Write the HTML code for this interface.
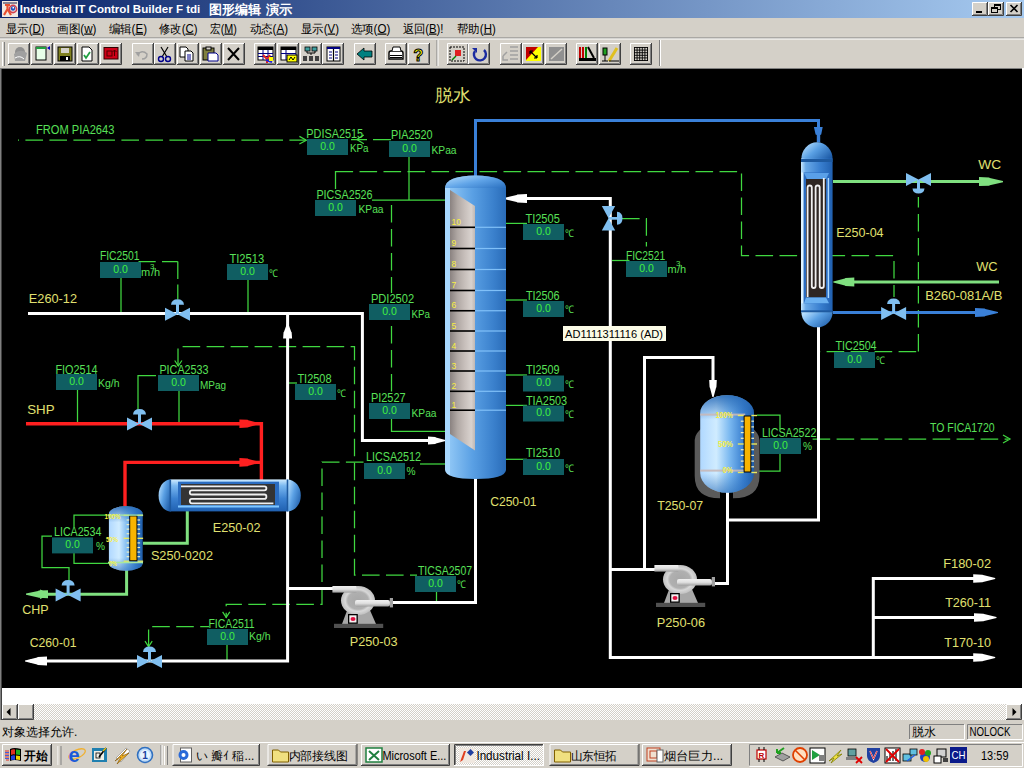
<!DOCTYPE html><html><head><meta charset="utf-8"><style>html,body{margin:0;padding:0;width:1024px;height:768px;overflow:hidden;background:#d4d0c8}svg{display:block;position:absolute;left:0;top:0}text{font-family:"Liberation Sans",sans-serif}</style></head><body>
<svg width="1024" height="768" viewBox="0 0 1024 768">
<defs><linearGradient id="tg" x1="0" x2="1" y1="0" y2="0"><stop offset="0" stop-color="#0a246a"/><stop offset="1" stop-color="#a6caf0"/></linearGradient><pattern id="dith" width="2" height="2" patternUnits="userSpaceOnUse"><rect width="2" height="2" fill="#d4d0c8"/><rect width="1" height="1" fill="#ffffff"/><rect x="1" y="1" width="1" height="1" fill="#ffffff"/></pattern></defs>
<rect x="0" y="0" width="1024" height="768" fill="#d4d0c8"/>
<rect x="0" y="0" width="1024" height="18" fill="url(#tg)"/>
<rect x="2" y="1" width="16" height="16" fill="#f0e8e0"/>
<rect x="3" y="2" width="14" height="2" fill="#404060" opacity="0.6"/><path d="M5,5 H10 M7.5,5 V9 L4,15 M7.5,9 L11,15" stroke="#e85030" stroke-width="2.2" fill="none"/><circle cx="13" cy="9" r="3.6" fill="none" stroke="#d04050" stroke-width="1.6"/><circle cx="13" cy="8.5" r="2.2" fill="#2050c0"/><rect x="12.5" y="7" width="1.5" height="1.5" fill="#fff"/>
<text x="19.8" y="13" fill="#ffffff" font-size="11.5" font-weight="bold" textLength="180.5" lengthAdjust="spacingAndGlyphs">Industrial IT Control Builder F tdi</text>
<text x="209" y="13.5" fill="#ffffff" font-size="12.5" font-weight="bold">图形编辑</text>
<text x="266" y="13.5" fill="#ffffff" font-size="12.5" font-weight="bold" textLength="26.5" lengthAdjust="spacingAndGlyphs">演示</text>
<rect x="972" y="2" width="16" height="14" fill="#d4d0c8"/>
<path d="M972.5,15 V2.5 H987" stroke="#ffffff" fill="none" stroke-width="1"/>
<path d="M973,14.5 H986.5 V3" stroke="#808080" fill="none" stroke-width="1"/>
<path d="M972,15.5 H987.5 V2" stroke="#404040" fill="none" stroke-width="1"/>
<rect x="976" y="11" width="6" height="2" fill="#000"/>
<rect x="988" y="2" width="16" height="14" fill="#d4d0c8"/>
<path d="M988.5,15 V2.5 H1003" stroke="#ffffff" fill="none" stroke-width="1"/>
<path d="M989,14.5 H1002.5 V3" stroke="#808080" fill="none" stroke-width="1"/>
<path d="M988,15.5 H1003.5 V2" stroke="#404040" fill="none" stroke-width="1"/>
<rect x="994.5" y="4.5" width="6" height="5" fill="none" stroke="#000"/><rect x="994" y="4" width="7" height="2" fill="#000"/>
<rect x="991.5" y="7.5" width="6" height="5" fill="#d4d0c8" stroke="#000"/><rect x="991" y="7" width="7" height="2" fill="#000"/>
<rect x="1006" y="2" width="16" height="14" fill="#d4d0c8"/>
<path d="M1006.5,15 V2.5 H1021" stroke="#ffffff" fill="none" stroke-width="1"/>
<path d="M1007,14.5 H1020.5 V3" stroke="#808080" fill="none" stroke-width="1"/>
<path d="M1006,15.5 H1021.5 V2" stroke="#404040" fill="none" stroke-width="1"/>
<path d="M1010.5,5 L1017.5,12 M1017.5,5 L1010.5,12" stroke="#000" stroke-width="1.6"/>
<text x="6" y="32.5" fill="#000" font-size="12" textLength="38.5" lengthAdjust="spacingAndGlyphs">显示(<tspan text-decoration="underline">D</tspan>)</text>
<text x="57" y="32.5" fill="#000" font-size="12" textLength="39.5" lengthAdjust="spacingAndGlyphs">画图(<tspan text-decoration="underline">w</tspan>)</text>
<text x="108.5" y="32.5" fill="#000" font-size="12" textLength="38.5" lengthAdjust="spacingAndGlyphs">编辑(<tspan text-decoration="underline">E</tspan>)</text>
<text x="159" y="32.5" fill="#000" font-size="12" textLength="38.5" lengthAdjust="spacingAndGlyphs">修改(<tspan text-decoration="underline">C</tspan>)</text>
<text x="210" y="32.5" fill="#000" font-size="12" textLength="26.9" lengthAdjust="spacingAndGlyphs">宏(<tspan text-decoration="underline">M</tspan>)</text>
<text x="249.5" y="32.5" fill="#000" font-size="12" textLength="38.5" lengthAdjust="spacingAndGlyphs">动态(<tspan text-decoration="underline">A</tspan>)</text>
<text x="301" y="32.5" fill="#000" font-size="12" textLength="38.0" lengthAdjust="spacingAndGlyphs">显示(<tspan text-decoration="underline">V</tspan>)</text>
<text x="350.5" y="32.5" fill="#000" font-size="12" textLength="39.8" lengthAdjust="spacingAndGlyphs">选项(<tspan text-decoration="underline">O</tspan>)</text>
<text x="402.5" y="32.5" fill="#000" font-size="12" textLength="41.0" lengthAdjust="spacingAndGlyphs">返回(<tspan text-decoration="underline">B</tspan>)!</text>
<text x="457" y="32.5" fill="#000" font-size="12" textLength="38.7" lengthAdjust="spacingAndGlyphs">帮助(<tspan text-decoration="underline">H</tspan>)</text>
<rect x="0" y="37.5" width="1024" height="1" fill="#808080"/><rect x="0" y="38.5" width="1024" height="1" fill="#ffffff"/>
<rect x="2" y="42" width="1" height="24" fill="#ffffff"/><rect x="4" y="42" width="1" height="24" fill="#808080"/>
<rect x="659" y="40" width="1" height="26" fill="#808080"/><rect x="660" y="40" width="1" height="26" fill="#ffffff"/>
<rect x="436.5" y="40" width="1" height="26" fill="#808080"/><rect x="437.5" y="40" width="1" height="26" fill="#ffffff"/>
<rect x="8" y="43" width="22" height="22" fill="#d4d0c8"/>
<path d="M8.5,64 V43.5 H29" stroke="#ffffff" fill="none" stroke-width="1"/>
<path d="M9,63.5 H28.5 V44" stroke="#808080" fill="none" stroke-width="1"/>
<path d="M8,64.5 H29.5 V43" stroke="#404040" fill="none" stroke-width="1"/>
<rect x="31" y="43" width="22" height="22" fill="#d4d0c8"/>
<path d="M31.5,64 V43.5 H52" stroke="#ffffff" fill="none" stroke-width="1"/>
<path d="M32,63.5 H51.5 V44" stroke="#808080" fill="none" stroke-width="1"/>
<path d="M31,64.5 H52.5 V43" stroke="#404040" fill="none" stroke-width="1"/>
<rect x="54" y="43" width="22" height="22" fill="#d4d0c8"/>
<path d="M54.5,64 V43.5 H75" stroke="#ffffff" fill="none" stroke-width="1"/>
<path d="M55,63.5 H74.5 V44" stroke="#808080" fill="none" stroke-width="1"/>
<path d="M54,64.5 H75.5 V43" stroke="#404040" fill="none" stroke-width="1"/>
<rect x="77" y="43" width="22" height="22" fill="#d4d0c8"/>
<path d="M77.5,64 V43.5 H98" stroke="#ffffff" fill="none" stroke-width="1"/>
<path d="M78,63.5 H97.5 V44" stroke="#808080" fill="none" stroke-width="1"/>
<path d="M77,64.5 H98.5 V43" stroke="#404040" fill="none" stroke-width="1"/>
<rect x="100" y="43" width="22" height="22" fill="#d4d0c8"/>
<path d="M100.5,64 V43.5 H121" stroke="#ffffff" fill="none" stroke-width="1"/>
<path d="M101,63.5 H120.5 V44" stroke="#808080" fill="none" stroke-width="1"/>
<path d="M100,64.5 H121.5 V43" stroke="#404040" fill="none" stroke-width="1"/>
<rect x="132" y="43" width="22" height="22" fill="#d4d0c8"/>
<path d="M132.5,64 V43.5 H153" stroke="#ffffff" fill="none" stroke-width="1"/>
<path d="M133,63.5 H152.5 V44" stroke="#808080" fill="none" stroke-width="1"/>
<path d="M132,64.5 H153.5 V43" stroke="#404040" fill="none" stroke-width="1"/>
<rect x="154" y="43" width="22" height="22" fill="#d4d0c8"/>
<path d="M154.5,64 V43.5 H175" stroke="#ffffff" fill="none" stroke-width="1"/>
<path d="M155,63.5 H174.5 V44" stroke="#808080" fill="none" stroke-width="1"/>
<path d="M154,64.5 H175.5 V43" stroke="#404040" fill="none" stroke-width="1"/>
<rect x="177" y="43" width="22" height="22" fill="#d4d0c8"/>
<path d="M177.5,64 V43.5 H198" stroke="#ffffff" fill="none" stroke-width="1"/>
<path d="M178,63.5 H197.5 V44" stroke="#808080" fill="none" stroke-width="1"/>
<path d="M177,64.5 H198.5 V43" stroke="#404040" fill="none" stroke-width="1"/>
<rect x="200" y="43" width="22" height="22" fill="#d4d0c8"/>
<path d="M200.5,64 V43.5 H221" stroke="#ffffff" fill="none" stroke-width="1"/>
<path d="M201,63.5 H220.5 V44" stroke="#808080" fill="none" stroke-width="1"/>
<path d="M200,64.5 H221.5 V43" stroke="#404040" fill="none" stroke-width="1"/>
<rect x="223" y="43" width="22" height="22" fill="#d4d0c8"/>
<path d="M223.5,64 V43.5 H244" stroke="#ffffff" fill="none" stroke-width="1"/>
<path d="M224,63.5 H243.5 V44" stroke="#808080" fill="none" stroke-width="1"/>
<path d="M223,64.5 H244.5 V43" stroke="#404040" fill="none" stroke-width="1"/>
<rect x="254" y="43" width="22" height="22" fill="#d4d0c8"/>
<path d="M254.5,64 V43.5 H275" stroke="#ffffff" fill="none" stroke-width="1"/>
<path d="M255,63.5 H274.5 V44" stroke="#808080" fill="none" stroke-width="1"/>
<path d="M254,64.5 H275.5 V43" stroke="#404040" fill="none" stroke-width="1"/>
<rect x="277" y="43" width="22" height="22" fill="#d4d0c8"/>
<path d="M277.5,64 V43.5 H298" stroke="#ffffff" fill="none" stroke-width="1"/>
<path d="M278,63.5 H297.5 V44" stroke="#808080" fill="none" stroke-width="1"/>
<path d="M277,64.5 H298.5 V43" stroke="#404040" fill="none" stroke-width="1"/>
<rect x="300" y="43" width="22" height="22" fill="#d4d0c8"/>
<path d="M300.5,64 V43.5 H321" stroke="#ffffff" fill="none" stroke-width="1"/>
<path d="M301,63.5 H320.5 V44" stroke="#808080" fill="none" stroke-width="1"/>
<path d="M300,64.5 H321.5 V43" stroke="#404040" fill="none" stroke-width="1"/>
<rect x="322" y="43" width="22" height="22" fill="#d4d0c8"/>
<path d="M322.5,64 V43.5 H343" stroke="#ffffff" fill="none" stroke-width="1"/>
<path d="M323,63.5 H342.5 V44" stroke="#808080" fill="none" stroke-width="1"/>
<path d="M322,64.5 H343.5 V43" stroke="#404040" fill="none" stroke-width="1"/>
<rect x="354" y="43" width="22" height="22" fill="#d4d0c8"/>
<path d="M354.5,64 V43.5 H375" stroke="#ffffff" fill="none" stroke-width="1"/>
<path d="M355,63.5 H374.5 V44" stroke="#808080" fill="none" stroke-width="1"/>
<path d="M354,64.5 H375.5 V43" stroke="#404040" fill="none" stroke-width="1"/>
<rect x="385" y="43" width="22" height="22" fill="#d4d0c8"/>
<path d="M385.5,64 V43.5 H406" stroke="#ffffff" fill="none" stroke-width="1"/>
<path d="M386,63.5 H405.5 V44" stroke="#808080" fill="none" stroke-width="1"/>
<path d="M385,64.5 H406.5 V43" stroke="#404040" fill="none" stroke-width="1"/>
<rect x="408" y="43" width="22" height="22" fill="#d4d0c8"/>
<path d="M408.5,64 V43.5 H429" stroke="#ffffff" fill="none" stroke-width="1"/>
<path d="M409,63.5 H428.5 V44" stroke="#808080" fill="none" stroke-width="1"/>
<path d="M408,64.5 H429.5 V43" stroke="#404040" fill="none" stroke-width="1"/>
<rect x="447" y="43" width="22" height="22" fill="#d4d0c8"/>
<path d="M447.5,64 V43.5 H468" stroke="#ffffff" fill="none" stroke-width="1"/>
<path d="M448,63.5 H467.5 V44" stroke="#808080" fill="none" stroke-width="1"/>
<path d="M447,64.5 H468.5 V43" stroke="#404040" fill="none" stroke-width="1"/>
<rect x="468" y="43" width="22" height="22" fill="#d4d0c8"/>
<path d="M468.5,64 V43.5 H489" stroke="#ffffff" fill="none" stroke-width="1"/>
<path d="M469,63.5 H488.5 V44" stroke="#808080" fill="none" stroke-width="1"/>
<path d="M468,64.5 H489.5 V43" stroke="#404040" fill="none" stroke-width="1"/>
<rect x="500" y="43" width="22" height="22" fill="#d4d0c8"/>
<path d="M500.5,64 V43.5 H521" stroke="#ffffff" fill="none" stroke-width="1"/>
<path d="M501,63.5 H520.5 V44" stroke="#808080" fill="none" stroke-width="1"/>
<path d="M500,64.5 H521.5 V43" stroke="#404040" fill="none" stroke-width="1"/>
<rect x="522" y="43" width="22" height="22" fill="#d4d0c8"/>
<path d="M522.5,64 V43.5 H543" stroke="#ffffff" fill="none" stroke-width="1"/>
<path d="M523,63.5 H542.5 V44" stroke="#808080" fill="none" stroke-width="1"/>
<path d="M522,64.5 H543.5 V43" stroke="#404040" fill="none" stroke-width="1"/>
<rect x="545" y="43" width="22" height="22" fill="#d4d0c8"/>
<path d="M545.5,64 V43.5 H566" stroke="#ffffff" fill="none" stroke-width="1"/>
<path d="M546,63.5 H565.5 V44" stroke="#808080" fill="none" stroke-width="1"/>
<path d="M545,64.5 H566.5 V43" stroke="#404040" fill="none" stroke-width="1"/>
<rect x="576" y="43" width="22" height="22" fill="#d4d0c8"/>
<path d="M576.5,64 V43.5 H597" stroke="#ffffff" fill="none" stroke-width="1"/>
<path d="M577,63.5 H596.5 V44" stroke="#808080" fill="none" stroke-width="1"/>
<path d="M576,64.5 H597.5 V43" stroke="#404040" fill="none" stroke-width="1"/>
<rect x="599" y="43" width="22" height="22" fill="#d4d0c8"/>
<path d="M599.5,64 V43.5 H620" stroke="#ffffff" fill="none" stroke-width="1"/>
<path d="M600,63.5 H619.5 V44" stroke="#808080" fill="none" stroke-width="1"/>
<path d="M599,64.5 H620.5 V43" stroke="#404040" fill="none" stroke-width="1"/>
<rect x="630" y="43" width="22" height="22" fill="#d4d0c8"/>
<path d="M630.5,64 V43.5 H651" stroke="#ffffff" fill="none" stroke-width="1"/>
<path d="M631,63.5 H650.5 V44" stroke="#808080" fill="none" stroke-width="1"/>
<path d="M630,64.5 H651.5 V43" stroke="#404040" fill="none" stroke-width="1"/>
<circle cx="20" cy="52" r="5" fill="#909090"/><path d="M14,54 Q20,48 27,53 L25,61 L15,61 Z" fill="#a0a0a0"/><path d="M15,58 Q20,55 24,59" stroke="#fff" fill="none"/>
<rect x="36" y="47" width="10" height="13" fill="#e8ffe8" stroke="#000"/><rect x="36" y="47" width="10" height="2" fill="#20a040"/><path d="M47,48 L50,46 L50,50 Z" fill="#0000c0"/>
<rect x="58" y="47" width="14" height="14" fill="#808020" stroke="#000"/><rect x="61" y="48" width="8" height="5" fill="#d4d0c8"/><rect x="60" y="56" width="10" height="5" fill="#000"/><rect x="66" y="57" width="2" height="3" fill="#fff"/>
<path d="M82,47 H89 L92,50 V61 H82 Z" fill="#fff" stroke="#000"/><path d="M84,55 L86,58 L90,52" stroke="#20a040" stroke-width="1.8" fill="none"/>
<rect x="104" y="47.5" width="14" height="11.5" fill="#d00018" stroke="#300000"/><rect x="107" y="51" width="5" height="5" fill="none" stroke="#500000"/><path d="M114.5,50 V56 M112.5,52 L114.5,50 L116.5,52" stroke="#500000" fill="none"/>
<path d="M137,55 Q142,49 147,54 Q147,59 142,59" stroke="#a0a0a0" stroke-width="1.5" fill="none"/><path d="M135,52 L139,57 L140,52 Z" fill="#a0a0a0"/>
<path d="M161,47 L167,57 M168,47 L162,57" stroke="#000" stroke-width="1.2"/><circle cx="161" cy="59" r="2.5" fill="none" stroke="#00008b" stroke-width="1.4"/><circle cx="168" cy="59" r="2.5" fill="none" stroke="#00008b" stroke-width="1.4"/>
<path d="M180,47 H186 L188,49 V57 H180 Z" fill="#fff" stroke="#000"/><path d="M185,51 H191 L193,53 V61 H185 Z" fill="#fff" stroke="#000"/><path d="M187,55 H191 M187,57 H191 M187,59 H191" stroke="#00008b"/>
<rect x="203" y="48" width="11" height="12" fill="#808040" stroke="#000"/><rect x="206" y="47" width="5" height="3" fill="#d4d0c8" stroke="#000"/><path d="M208,53 H216 L218,55 V61 H208 Z" fill="#fff" stroke="#00008b"/>
<path d="M228,48 L239,60 M239,48 L228,60" stroke="#000" stroke-width="2"/>
<rect x="258" y="47" width="15" height="13" fill="#fff" stroke="#000"/><rect x="258" y="47" width="15" height="3" fill="#000"/><path d="M258,53.5 H273 M258,56.5 H273 M263,50 V60 M268,50 V60" stroke="#000080" stroke-width="1"/>
<path d="M263,55 L267,59 L270,55 M267,59 V63" stroke="#e02020" stroke-width="2" fill="none"/><path d="M266,60 L272,62" stroke="#2020e0" stroke-width="2"/><rect x="269" y="57" width="4" height="4" fill="#ffff00"/>
<rect x="281" y="47" width="15" height="13" fill="#fff" stroke="#000"/><rect x="281" y="47" width="15" height="3" fill="#000"/><path d="M281,53.5 H296 M286,50 V60" stroke="#000080" stroke-width="1"/>
<rect x="287" y="55" width="10" height="7" fill="#ffff00" stroke="#000"/><path d="M289,60 L291,57 L293,60 L295,57" stroke="#000" fill="none"/>
<rect x="305" y="47" width="5" height="4" fill="#40a0a0" stroke="#000" stroke-width="0.8"/><rect x="312" y="47" width="5" height="4" fill="#40a0a0" stroke="#000" stroke-width="0.8"/><path d="M307,51 V53 H315 V51 M311,53 V55" stroke="#000" fill="none"/><rect x="303" y="56" width="4" height="5" fill="#404040"/><rect x="309" y="56" width="4" height="5" fill="#404040"/><rect x="315" y="56" width="4" height="5" fill="#404040"/>
<rect x="327" y="47" width="13" height="14" fill="#fff" stroke="#000"/><rect x="327" y="47" width="13" height="2" fill="#000080"/><path d="M333.5,49 V61" stroke="#000" stroke-width="1.2"/><path d="M329,52 H332 M329,55 H332 M329,58 H332 M335,52 H338 M335,55 H338 M335,58 H338" stroke="#000080"/>
<path d="M357,54 L364,48 L364,51 L372,51 L372,57 L364,57 L364,60 Z" fill="#008080" stroke="#000" stroke-width="0.8"/>
<path d="M389,53 Q389,51 391,51 H401 Q403,51 403,53 V59 H389 Z" fill="#fff" stroke="#000" stroke-width="1.4"/><path d="M392,51 L393,47 H400 L401,51" fill="#fff" stroke="#000"/><path d="M390,55.5 H402 M390,57.5 H402" stroke="#000"/>
<text x="413.5" y="61" font-size="16" font-weight="bold" fill="#ffff00" stroke="#000" stroke-width="1">?</text>
<rect x="450" y="47" width="14" height="14" fill="none" stroke="#000" stroke-dasharray="2 1"/><rect x="455" y="50" width="6" height="6" fill="#e02020"/><path d="M452,60 L456,56" stroke="#008000" stroke-width="1.5"/>
<path d="M484,50 A6,6 0 1 1 475,51" stroke="#1a2aa0" stroke-width="2.4" fill="none"/><path d="M472,48 L477,48 L477,53 Z" fill="#1a2aa0"/>
<path d="M503,56 V60 H508 M503,56 L507,52" stroke="#a0a0a0" stroke-width="1.5" fill="none"/><path d="M510,47 H518 M510,51 H518 M510,55 H518 M510,59 H518" stroke="#a0a0a0" stroke-width="1.5"/>
<rect x="526" y="47" width="15" height="14" fill="#ffff00"/><path d="M526,47 H538 L526,60 Z" fill="#c00000"/><path d="M530,51 L537,58 M530,51 L530,54 M530,51 L533,51 M537,58 L537,55 M537,58 L534,58" stroke="#000" stroke-width="1.2"/>
<rect x="549" y="47" width="15" height="14" fill="#909090"/><path d="M551,59 L562,49" stroke="#d4d0c8" stroke-width="1.5"/>
<path d="M580,47 V58 M583,47 V58" stroke="#c00000" stroke-width="2"/><path d="M586,47 V58" stroke="#008000" stroke-width="2"/><path d="M588,47 L594,58" stroke="#000" stroke-width="2"/><rect x="579" y="58" width="17" height="3" fill="#000"/>
<rect x="603" y="48" width="4" height="7" fill="#20a020" stroke="#000"/><path d="M605,55 V61 M602,61 H608" stroke="#000"/><path d="M609,61 L617,48" stroke="#e0c020" stroke-width="3"/><path d="M609,61 H619" stroke="#000"/>
<path d="M634.5,47 V61 M634,47.5 H648" stroke="#000" stroke-width="0.9"/>
<path d="M637.1,47 V61 M634,50.1 H648" stroke="#000" stroke-width="0.9"/>
<path d="M639.7,47 V61 M634,52.7 H648" stroke="#000" stroke-width="0.9"/>
<path d="M642.3,47 V61 M634,55.3 H648" stroke="#000" stroke-width="0.9"/>
<path d="M644.9,47 V61 M634,57.9 H648" stroke="#000" stroke-width="0.9"/>
<path d="M647.5,47 V61 M634,60.5 H648" stroke="#000" stroke-width="0.9"/>
<rect x="2" y="69" width="1020" height="619" fill="#000"/>
<defs>
<linearGradient id="colb" x1="0" x2="1" y1="0" y2="0">
 <stop offset="0" stop-color="#a8d8ff"/><stop offset="0.08" stop-color="#a8d8ff"/><stop offset="0.09" stop-color="#8cc4f4"/>
 <stop offset="0.45" stop-color="#5aa0e4"/><stop offset="0.8" stop-color="#3a80cc"/><stop offset="1" stop-color="#2a6cb8"/></linearGradient>
<linearGradient id="colg" x1="0" x2="1" y1="0" y2="0">
 <stop offset="0" stop-color="#8a8280"/><stop offset="0.3" stop-color="#b0a8a4"/><stop offset="0.6" stop-color="#c8c0bc"/><stop offset="0.85" stop-color="#d8d2ce"/><stop offset="1" stop-color="#c0b8b4"/></linearGradient>
<linearGradient id="domet" x1="0" x2="1" y1="0" y2="1">
 <stop offset="0" stop-color="#b8e0ff"/><stop offset="0.5" stop-color="#60a4e8"/><stop offset="1" stop-color="#2a70c0"/></linearGradient>
<linearGradient id="exv" x1="0" x2="1" y1="0" y2="0">
 <stop offset="0" stop-color="#c8e8ff"/><stop offset="0.15" stop-color="#6aaae8"/><stop offset="0.6" stop-color="#3a80d0"/><stop offset="1" stop-color="#2060b0"/></linearGradient>
<linearGradient id="exh" x1="0" x2="0" y1="0" y2="1">
 <stop offset="0" stop-color="#d0ecff"/><stop offset="0.2" stop-color="#7ab8f0"/><stop offset="0.6" stop-color="#3a80d0"/><stop offset="1" stop-color="#2060b0"/></linearGradient>
<linearGradient id="domeh" x1="0" x2="1" y1="0.2" y2="0.8">
 <stop offset="0" stop-color="#b8e0ff"/><stop offset="0.45" stop-color="#5aa0e4"/><stop offset="1" stop-color="#1e5ca8"/></linearGradient>
<linearGradient id="tank" x1="0" x2="1" y1="0" y2="0">
 <stop offset="0" stop-color="#b0d8ff"/><stop offset="0.3" stop-color="#d0ecff"/><stop offset="0.55" stop-color="#7ab8f0"/><stop offset="0.8" stop-color="#3a80d0"/><stop offset="1" stop-color="#1e5ca8"/></linearGradient>
<linearGradient id="tankv" x1="0" x2="0" y1="0" y2="1">
 <stop offset="0" stop-color="#2a6cb8" stop-opacity="0.9"/><stop offset="0.25" stop-color="#2a6cb8" stop-opacity="0"/><stop offset="0.8" stop-color="#2a6cb8" stop-opacity="0"/><stop offset="1" stop-color="#2a6cb8" stop-opacity="0.6"/></linearGradient>
<linearGradient id="pipeg" x1="0" x2="0" y1="0" y2="1">
 <stop offset="0" stop-color="#f0f0f0"/><stop offset="0.5" stop-color="#e0e0e0"/><stop offset="1" stop-color="#a0a0a0"/></linearGradient>
<radialGradient id="pumpc" cx="0.5" cy="0.5" r="0.5">
 <stop offset="0" stop-color="#a8a8a8"/><stop offset="0.6" stop-color="#b0b0b0"/><stop offset="0.75" stop-color="#d8d8d8"/><stop offset="1" stop-color="#c0c0c0"/></radialGradient>
<g id="pump">
 <path d="M348,608 L369,608 L376,624 L342,624 Z" fill="#a8a8a8"/>
 <rect x="334" y="623.8" width="49.2" height="4.2" fill="#505050"/>
 <ellipse cx="358" cy="600.5" rx="17" ry="14.5" fill="url(#pumpc)"/>
 <rect x="332.4" y="586" width="24" height="6.6" fill="url(#pipeg)"/>
 <rect x="355" y="600" width="35" height="6.6" fill="url(#pipeg)" rx="2"/>
 <rect x="389.8" y="598" width="3.2" height="9.4" fill="#a0a0a0"/>
 <rect x="348" y="614" width="9.8" height="9.8" fill="#000"/>
 <rect x="349.3" y="615.3" width="7.2" height="7.2" fill="#f4f0f0"/>
 <ellipse cx="353" cy="619" rx="2.5" ry="2" fill="#e01040"/>
</g>
</defs>
<text x="36" y="134" fill="#58e058" font-size="12" textLength="78.4" lengthAdjust="spacingAndGlyphs">FROM PIA2643</text>
<line x1="18" y1="140.2" x2="306" y2="140.2" stroke="#40d840" stroke-width="1.25" stroke-dasharray="17.6 6.4" stroke-dashoffset="16.6"/>
<polyline points="299.4,136.39999999999998 306.4,140.2 299.4,144.0" fill="none" stroke="#40d840" stroke-width="1.2"/>
<line x1="391" y1="139.5" x2="351" y2="139.5" stroke="#40d840" stroke-width="1.25" stroke-dasharray="18 6"/>
<polyline points="363.8,135.1 356.8,139.4 363.8,143.70000000000002" fill="none" stroke="#40d840" stroke-width="1.2"/>
<line x1="335.5" y1="189" x2="335.5" y2="171" stroke="#40d840" stroke-width="1.25"/>
<polyline points="335.5,171.5 741.5,171.5 741.5,255.5 894,255.5 894,297" fill="none" stroke="#40d840" stroke-width="1.25" stroke-dasharray="17.6 6.4"/>
<line x1="409" y1="157" x2="409" y2="200" stroke="#40d840" stroke-width="1.25"/>
<line x1="372" y1="200" x2="446" y2="200" stroke="#40d840" stroke-width="1.25"/>
<line x1="391.5" y1="205" x2="391.5" y2="293" stroke="#40d840" stroke-width="1.25" stroke-dasharray="17.6 6.4"/>
<line x1="391.5" y1="326" x2="391.5" y2="392" stroke="#40d840" stroke-width="1.25" stroke-dasharray="17.6 6.4"/>
<polyline points="391.5,419 391.5,431.4 446,431.4" fill="none" stroke="#40d840" stroke-width="1.25"/>
<line x1="506" y1="223.4" x2="527" y2="223.4" stroke="#40d840" stroke-width="1.25"/>
<line x1="506" y1="300" x2="527" y2="300" stroke="#40d840" stroke-width="1.25"/>
<line x1="506" y1="375" x2="527" y2="375" stroke="#40d840" stroke-width="1.25"/>
<line x1="506" y1="405.4" x2="527" y2="405.4" stroke="#40d840" stroke-width="1.25"/>
<line x1="506" y1="459.3" x2="527" y2="459.3" stroke="#40d840" stroke-width="1.25"/>
<polyline points="622,218.5 646.4,218.5 646.4,246.5" fill="none" stroke="#40d840" stroke-width="1.25" stroke-dasharray="17.6 6.4"/>
<line x1="612" y1="260.5" x2="629.5" y2="260.5" stroke="#40d840" stroke-width="1.25"/>
<line x1="918.4" y1="351.5" x2="918.4" y2="197" stroke="#40d840" stroke-width="1.25" stroke-dasharray="17.6 6.4"/>
<line x1="916.2" y1="351.5" x2="819" y2="351.5" stroke="#40d840" stroke-width="1.25" stroke-dasharray="17.6 6.4"/>
<polyline points="138.5,261.5 177.8,261.5" fill="none" stroke="#40d840" stroke-width="1.25" stroke-dasharray="17.2 6.3"/>
<polyline points="177.8,261.5 177.8,299.4" fill="none" stroke="#40d840" stroke-width="1.25" stroke-dasharray="17.5 5.5"/>
<line x1="121" y1="278" x2="121" y2="313.5" stroke="#40d840" stroke-width="1.25"/>
<line x1="248" y1="279.5" x2="248" y2="313.5" stroke="#40d840" stroke-width="1.25"/>
<polyline points="178,366 178,346.6 354.5,346.6 354.5,575.2 417,575.2" fill="none" stroke="#40d840" stroke-width="1.25" stroke-dasharray="17.6 6.4"/>
<polyline points="174.70000000000002,360.5 178.3,366 181.9,360.5" fill="none" stroke="#40d840" stroke-width="1.2"/>
<polyline points="156,375.5 138,375.5 138,410" fill="none" stroke="#40d840" stroke-width="1.25"/>
<line x1="179" y1="391" x2="179" y2="424" stroke="#40d840" stroke-width="1.25"/>
<line x1="77.5" y1="390" x2="77.5" y2="424" stroke="#40d840" stroke-width="1.25"/>
<line x1="287" y1="383" x2="297" y2="383" stroke="#40d840" stroke-width="1.25"/>
<line x1="420" y1="464" x2="446" y2="464" stroke="#40d840" stroke-width="1.25"/>
<polyline points="363.5,462 322,462 322,604.4 226.2,604.4 226.2,618" fill="none" stroke="#40d840" stroke-width="1.25" stroke-dasharray="17.6 6.4"/>
<polyline points="222.6,611.8 226.2,617.3 229.79999999999998,611.8" fill="none" stroke="#40d840" stroke-width="1.2"/>
<polyline points="148.6,647 148.6,626.6 209,626.6" fill="none" stroke="#40d840" stroke-width="1.25" stroke-dasharray="17.6 6.4"/>
<polyline points="145.0,641.1 148.6,646.6 152.2,641.1" fill="none" stroke="#40d840" stroke-width="1.2"/>
<line x1="227" y1="643" x2="227" y2="661" stroke="#40d840" stroke-width="1.25"/>
<line x1="436.5" y1="591" x2="436.5" y2="602.5" stroke="#40d840" stroke-width="1.25"/>
<polyline points="757,415 780,415 780,429" fill="none" stroke="#40d840" stroke-width="1.25"/>
<polyline points="780,452.5 780,471 757,471" fill="none" stroke="#40d840" stroke-width="1.25"/>
<line x1="812.6" y1="439.1" x2="1008" y2="439.1" stroke="#40d840" stroke-width="1.25" stroke-dasharray="17.6 6.4"/>
<polyline points="1003,435.1 1010,439.1 1003,443.1" fill="none" stroke="#40d840" stroke-width="1.2"/>
<text x="930" y="432" fill="#58e058" font-size="12" textLength="64.6" lengthAdjust="spacingAndGlyphs">TO FICA1720</text>
<polyline points="74,527 74,515 143,515" fill="none" stroke="#40d840" stroke-width="1.25"/>
<polyline points="74,552 74,563.3 143,563.3" fill="none" stroke="#40d840" stroke-width="1.25"/>
<polyline points="52,536.2 42,536.2 42,567.5 69,567.5 69,581" fill="none" stroke="#40d840" stroke-width="1.25"/>
<polyline points="28,313.5 362.4,313.5 362.4,440.5 430,440.5" fill="none" stroke="#ffffff" stroke-width="3"/>
<polygon points="445.50,439.90 435.88,437.38 435.35,436.99 428.00,436.60 428.00,444.40 435.35,444.01 435.88,443.62 445.50,441.10" fill="#ffffff"/>
<polyline points="287.6,313.5 287.6,661 30,661" fill="none" stroke="#ffffff" stroke-width="3"/>
<polygon points="287.00,323.60 284.00,331.85 283.55,332.30 283.10,338.60 292.10,338.60 291.65,332.30 291.20,331.85 288.20,323.60" fill="#ffffff"/>
<polygon points="25.00,660.40 37.10,657.48 37.76,657.04 47.00,656.60 47.00,665.40 37.76,664.96 37.10,664.52 25.00,661.60" fill="#ffffff"/>
<line x1="287.6" y1="588.5" x2="334" y2="588.5" stroke="#ffffff" stroke-width="3"/>
<polyline points="475.5,478 475.5,602.5 392,602.5" fill="none" stroke="#ffffff" stroke-width="3"/>
<polyline points="524,198.5 610.3,198.5 610.3,657.5 980,657.5" fill="none" stroke="#ffffff" stroke-width="3"/>
<polygon points="504.00,197.90 516.65,194.98 517.34,194.54 527.00,194.10 527.00,202.90 517.34,202.46 516.65,202.02 504.00,199.10" fill="#ffffff"/>
<polygon points="995.20,656.90 983.10,654.06 982.44,653.63 973.20,653.20 973.20,661.80 982.44,661.37 983.10,660.94 995.20,658.10" fill="#ffffff"/>
<polyline points="975,578.5 873.3,578.5 873.3,657.5" fill="none" stroke="#ffffff" stroke-width="3"/>
<polygon points="995.20,577.90 983.10,575.06 982.44,574.63 973.20,574.20 973.20,582.80 982.44,582.37 983.10,581.94 995.20,579.10" fill="#ffffff"/>
<line x1="873.3" y1="617.5" x2="977" y2="617.5" stroke="#ffffff" stroke-width="3"/>
<polygon points="996.50,616.90 984.12,614.06 983.45,613.63 974.00,613.20 974.00,621.80 983.45,621.37 984.12,620.94 996.50,618.10" fill="#ffffff"/>
<polyline points="644.5,569.5 644.5,357.5 713,357.5 713,385" fill="none" stroke="#ffffff" stroke-width="3"/>
<polygon points="712.40,397.00 709.96,387.65 709.58,387.14 709.20,380.00 716.80,380.00 716.42,387.14 716.04,387.65 713.60,397.00" fill="#ffffff"/>
<line x1="610.3" y1="569.5" x2="655" y2="569.5" stroke="#ffffff" stroke-width="3"/>
<polyline points="714,583.5 727.5,583.5 727.5,490" fill="none" stroke="#ffffff" stroke-width="3"/>
<polyline points="727.5,520 818.5,520 818.5,326" fill="none" stroke="#ffffff" stroke-width="3"/>
<polyline points="26,423.7 261.4,423.7 261.4,480" fill="none" stroke="#ff2020" stroke-width="3.4"/>
<polygon points="259.00,423.10 248.22,420.26 247.63,419.83 239.40,419.40 239.40,428.00 247.63,427.57 248.22,427.14 259.00,424.30" fill="#ff2020"/>
<polyline points="125,506 125,462.4 261.4,462.4" fill="none" stroke="#ff2020" stroke-width="3.4"/>
<polygon points="259.30,461.80 248.36,458.96 247.76,458.53 239.40,458.10 239.40,466.70 247.76,466.27 248.36,465.84 259.30,463.00" fill="#ff2020"/>
<polyline points="475.5,177 475.5,120.4 818.5,120.4 818.5,128" fill="none" stroke="#3a80d8" stroke-width="3"/>
<path d="M813.9,127 H822.7 L821.2,134.5 L820.2,135 V142.5 H816.8 V135 L815.6,134.5 Z" fill="#3a80d8"/>
<line x1="833" y1="181.6" x2="985" y2="181.6" stroke="#80e080" stroke-width="3"/>
<polygon points="1003.00,181.00 989.80,178.00 989.08,177.55 979.00,177.10 979.00,186.10 989.08,185.65 989.80,185.20 1003.00,182.20" fill="#80e080"/>
<line x1="850" y1="282" x2="999" y2="282" stroke="#80e080" stroke-width="3"/>
<polygon points="833.30,281.40 844.85,278.40 845.48,277.95 854.30,277.50 854.30,286.50 845.48,286.05 844.85,285.60 833.30,282.60" fill="#80e080"/>
<line x1="833" y1="312.5" x2="980" y2="312.5" stroke="#3a80d8" stroke-width="3"/>
<polygon points="998.00,311.90 985.35,308.90 984.66,308.45 975.00,308.00 975.00,317.00 984.66,316.55 985.35,316.10 998.00,313.10" fill="#3a80d8"/>
<polyline points="143,543.3 187.3,543.3 187.3,511" fill="none" stroke="#80e080" stroke-width="3"/>
<polyline points="126.6,570 126.6,594.2 40,594.2" fill="none" stroke="#80e080" stroke-width="3"/>
<polygon points="26.00,593.60 38.10,591.00 38.76,590.60 48.00,590.20 48.00,598.20 38.76,597.80 38.10,597.40 26.00,594.80" fill="#80e080"/>
<path d="M40,590 L48.6,594.2 L40,598.4" fill="none" stroke="#80e080" stroke-width="1.2"/>
<path d="M445,188 Q446,176 475.5,175.6 Q505,176 506,188 V470 Q505,479 475.5,479 Q446,479 445,470 Z" fill="url(#colb)"/>
<path d="M445,188 Q446,176 475.5,175.6 Q505,176 506,188 Z" fill="url(#domet)" opacity="0.9"/>
<polygon points="450,190 475,206 475,450.5 450,434" fill="url(#colg)"/>
<rect x="450" y="226.5" width="25" height="1.6" fill="#000"/>
<rect x="475" y="226.70000000000002" width="31" height="1.2" fill="#80c0f8"/>
<text x="451.5" y="224.8" fill="#f8f040" font-size="8.5">10</text>
<rect x="450" y="247.7" width="25" height="1.6" fill="#000"/>
<rect x="475" y="247.9" width="31" height="1.2" fill="#80c0f8"/>
<text x="451.5" y="246.0" fill="#f8f040" font-size="8.5">9</text>
<rect x="450" y="268.7" width="25" height="1.6" fill="#000"/>
<rect x="475" y="268.9" width="31" height="1.2" fill="#80c0f8"/>
<text x="451.5" y="267.0" fill="#f8f040" font-size="8.5">8</text>
<rect x="450" y="289.7" width="25" height="1.6" fill="#000"/>
<rect x="475" y="289.9" width="31" height="1.2" fill="#80c0f8"/>
<text x="451.5" y="288.0" fill="#f8f040" font-size="8.5">7</text>
<rect x="450" y="309.95" width="25" height="1.6" fill="#000"/>
<rect x="475" y="310.15" width="31" height="1.2" fill="#80c0f8"/>
<text x="451.5" y="308.25" fill="#f8f040" font-size="8.5">6</text>
<rect x="450" y="330.2" width="25" height="1.6" fill="#000"/>
<rect x="475" y="330.4" width="31" height="1.2" fill="#80c0f8"/>
<text x="451.5" y="328.5" fill="#f8f040" font-size="8.5">5</text>
<rect x="450" y="350.2" width="25" height="1.6" fill="#000"/>
<rect x="475" y="350.4" width="31" height="1.2" fill="#80c0f8"/>
<text x="451.5" y="348.5" fill="#f8f040" font-size="8.5">4</text>
<rect x="450" y="370.2" width="25" height="1.6" fill="#000"/>
<rect x="475" y="370.4" width="31" height="1.2" fill="#80c0f8"/>
<text x="451.5" y="368.5" fill="#f8f040" font-size="8.5">3</text>
<rect x="450" y="390.5" width="25" height="1.6" fill="#000"/>
<rect x="475" y="390.7" width="31" height="1.2" fill="#80c0f8"/>
<text x="451.5" y="388.8" fill="#f8f040" font-size="8.5">2</text>
<rect x="450" y="409.4" width="25" height="1.6" fill="#000"/>
<rect x="475" y="409.59999999999997" width="31" height="1.2" fill="#80c0f8"/>
<text x="451.5" y="407.7" fill="#f8f040" font-size="8.5">1</text>
<path d="M801.4,159 A15.6,16.7 0 0 1 832.6,159 Z" fill="url(#domeh)"/>
<rect x="801" y="158.5" width="31.6" height="154" fill="url(#exv)"/>
<rect x="801" y="159" width="31.6" height="3" fill="#1e5aa0"/>
<rect x="803.4" y="172.5" width="26.4" height="130.8" fill="#2a6cc0"/>
<rect x="801" y="172.5" width="2.4" height="130.8" fill="#e0f4ff"/>
<path d="M804,173 H829 L826,179 H807 Z" fill="#5aa0e8"/>
<rect x="806" y="179" width="20" height="118.4" fill="#2e2622"/>
<path d="M807.6,297 V187.5 Q807.6,185.5 809.7,185.5 Q811.8,185.5 811.8,187.5 V286 Q811.8,288 813.7,288 Q815.6,288 815.6,286 V187.5 Q815.6,185.5 817.65,185.5 Q819.7,185.5 819.7,187.5 V286 Q819.7,288 821.75,288 Q823.8,288 823.8,286 V178" fill="none" stroke="#f0f0f0" stroke-width="1.8"/>
<rect x="827.7" y="178" width="1.4" height="120" fill="#a8d8ff"/>
<path d="M806,297.4 H826 L829,303.3 H804 Z" fill="#6ab0f0"/>
<rect x="801" y="310.3" width="31.6" height="2.3" fill="#1e5aa0"/>
<path d="M801.4,312.2 A15.6,15.1 0 0 0 832.6,312.2 Z" fill="url(#domeh)"/>
<path d="M170.5,479.4 A11.9,16 0 0 0 170.5,511.4 Z" fill="url(#domeh)"/>
<path d="M287.3,479.4 A13.5,16 0 0 1 287.3,511.4 Z" fill="url(#domeh)"/>
<rect x="170.3" y="479.4" width="117.2" height="32" fill="url(#exh)"/>
<rect x="169.5" y="479.4" width="1.6" height="32" fill="#1e5aa0"/><rect x="286.7" y="479.4" width="1.6" height="32" fill="#1e5aa0"/>
<rect x="178" y="481.7" width="101" height="26.6" fill="#2a6cc0"/>
<rect x="178" y="505.5" width="101" height="2" fill="#80c8ff"/>
<rect x="181" y="484" width="94" height="21" fill="#343434"/>
<path d="M181,486.4 H264.4 Q266.4,486.4 266.4,488.35 Q266.4,490.3 264.4,490.3 H191.8 Q189.8,490.3 189.8,492.4 Q189.8,494.5 191.8,494.5 H264.4 Q266.4,494.5 266.4,496.7 Q266.4,498.9 264.4,498.9 H191.8 Q189.8,498.9 189.8,501.1 Q189.8,503.3 191.8,503.3 H273.4" fill="none" stroke="#f0f0f0" stroke-width="1.8"/>
<path d="M108.9,513.7 A16.9,7.5 0 0 1 142.7,513.7 V563.3 A16.9,7.5 0 0 1 108.9,563.3 Z" fill="url(#tank)"/>
<path d="M108.9,513.7 A16.9,7.5 0 0 1 142.7,513.7 V563.3 A16.9,7.5 0 0 1 108.9,563.3 Z" fill="url(#tankv)"/>
<rect x="129.2" y="515.4" width="8.300000000000011" height="45.85000000000002" fill="#000"/>
<rect x="130.2" y="516.4" width="6.300000000000011" height="43.85000000000002" fill="#f8b400"/>
<rect x="123.6" y="514.6999999999999" width="5.599999999999994" height="1.4" fill="#e8e860"/>
<rect x="137.5" y="514.6999999999999" width="5.599999999999994" height="1.4" fill="#e8e860"/>
<rect x="126.6" y="519.385" width="2.5999999999999943" height="1.2" fill="#f0f0c0"/>
<rect x="137.5" y="519.385" width="2.5999999999999943" height="1.2" fill="#f0f0c0"/>
<rect x="126.6" y="523.9699999999999" width="2.5999999999999943" height="1.2" fill="#f0f0c0"/>
<rect x="137.5" y="523.9699999999999" width="2.5999999999999943" height="1.2" fill="#f0f0c0"/>
<rect x="126.6" y="528.555" width="2.5999999999999943" height="1.2" fill="#f0f0c0"/>
<rect x="137.5" y="528.555" width="2.5999999999999943" height="1.2" fill="#f0f0c0"/>
<rect x="126.6" y="533.14" width="2.5999999999999943" height="1.2" fill="#f0f0c0"/>
<rect x="137.5" y="533.14" width="2.5999999999999943" height="1.2" fill="#f0f0c0"/>
<rect x="123.6" y="537.625" width="5.599999999999994" height="1.4" fill="#e8e860"/>
<rect x="137.5" y="537.625" width="5.599999999999994" height="1.4" fill="#e8e860"/>
<rect x="126.6" y="542.31" width="2.5999999999999943" height="1.2" fill="#f0f0c0"/>
<rect x="137.5" y="542.31" width="2.5999999999999943" height="1.2" fill="#f0f0c0"/>
<rect x="126.6" y="546.895" width="2.5999999999999943" height="1.2" fill="#f0f0c0"/>
<rect x="137.5" y="546.895" width="2.5999999999999943" height="1.2" fill="#f0f0c0"/>
<rect x="126.6" y="551.48" width="2.5999999999999943" height="1.2" fill="#f0f0c0"/>
<rect x="137.5" y="551.48" width="2.5999999999999943" height="1.2" fill="#f0f0c0"/>
<rect x="126.6" y="556.0649999999999" width="2.5999999999999943" height="1.2" fill="#f0f0c0"/>
<rect x="137.5" y="556.0649999999999" width="2.5999999999999943" height="1.2" fill="#f0f0c0"/>
<rect x="123.6" y="560.55" width="5.599999999999994" height="1.4" fill="#e8e860"/>
<rect x="137.5" y="560.55" width="5.599999999999994" height="1.4" fill="#e8e860"/>
<line x1="108" y1="515.1" x2="143" y2="515.1" stroke="#a8e8a0" stroke-width="1.3"/>
<line x1="108" y1="562.5" x2="143" y2="562.5" stroke="#a8e8a0" stroke-width="1.3"/>
<text x="104.6" y="518.5" fill="#f8f040" font-size="8" font-weight="bold" textLength="16" lengthAdjust="spacingAndGlyphs">100%</text>
<text x="106" y="541.5" fill="#f8f040" font-size="8" font-weight="bold" textLength="12" lengthAdjust="spacingAndGlyphs">50%</text>
<text x="109" y="565.5" fill="#f8f040" font-size="8" font-weight="bold" textLength="8" lengthAdjust="spacingAndGlyphs">0%</text>
<path d="M694.7,440 A32.4,18.3 0 0 1 759.5,440 V476 Q759.5,498.3 733,498.3 V492 H720 V498.3 Q694.7,498.3 694.7,476 Z" fill="#5a5a5a"/>
<path d="M700.2,413 A26.9,17.8 0 0 1 754,413 V473 A26.9,19.8 0 0 1 700.2,473 Z" fill="url(#tank)"/><path d="M700.2,413 A26.9,17.8 0 0 1 754,413 V473 A26.9,19.8 0 0 1 700.2,473 Z" fill="url(#tankv)"/>
<rect x="700.2" y="413.6" width="45" height="2" fill="#c8b8b8" opacity="0.9"/><rect x="700.2" y="469.6" width="45" height="2" fill="#c8b8b8" opacity="0.9"/>
<rect x="743.6" y="415.5" width="7.7999999999999545" height="57.0" fill="#000"/>
<rect x="744.6" y="416.5" width="5.7999999999999545" height="55.0" fill="#f8b400"/>
<rect x="737.8" y="414.8" width="5.800000000000068" height="1.4" fill="#e8e860"/>
<rect x="751.4" y="414.8" width="5.600000000000023" height="1.4" fill="#e8e860"/>
<rect x="740.8" y="420.59999999999997" width="2.800000000000068" height="1.2" fill="#f0f0c0"/>
<rect x="751.4" y="420.59999999999997" width="2.6000000000000227" height="1.2" fill="#f0f0c0"/>
<rect x="740.8" y="426.29999999999995" width="2.800000000000068" height="1.2" fill="#f0f0c0"/>
<rect x="751.4" y="426.29999999999995" width="2.6000000000000227" height="1.2" fill="#f0f0c0"/>
<rect x="740.8" y="432.0" width="2.800000000000068" height="1.2" fill="#f0f0c0"/>
<rect x="751.4" y="432.0" width="2.6000000000000227" height="1.2" fill="#f0f0c0"/>
<rect x="740.8" y="437.7" width="2.800000000000068" height="1.2" fill="#f0f0c0"/>
<rect x="751.4" y="437.7" width="2.6000000000000227" height="1.2" fill="#f0f0c0"/>
<rect x="737.8" y="443.3" width="5.800000000000068" height="1.4" fill="#e8e860"/>
<rect x="751.4" y="443.3" width="5.600000000000023" height="1.4" fill="#e8e860"/>
<rect x="740.8" y="449.09999999999997" width="2.800000000000068" height="1.2" fill="#f0f0c0"/>
<rect x="751.4" y="449.09999999999997" width="2.6000000000000227" height="1.2" fill="#f0f0c0"/>
<rect x="740.8" y="454.79999999999995" width="2.800000000000068" height="1.2" fill="#f0f0c0"/>
<rect x="751.4" y="454.79999999999995" width="2.6000000000000227" height="1.2" fill="#f0f0c0"/>
<rect x="740.8" y="460.5" width="2.800000000000068" height="1.2" fill="#f0f0c0"/>
<rect x="751.4" y="460.5" width="2.6000000000000227" height="1.2" fill="#f0f0c0"/>
<rect x="740.8" y="466.2" width="2.800000000000068" height="1.2" fill="#f0f0c0"/>
<rect x="751.4" y="466.2" width="2.6000000000000227" height="1.2" fill="#f0f0c0"/>
<rect x="737.8" y="471.8" width="5.800000000000068" height="1.4" fill="#e8e860"/>
<rect x="751.4" y="471.8" width="5.600000000000023" height="1.4" fill="#e8e860"/>
<text x="715.8" y="417.5" fill="#f8f040" font-size="8.5" font-weight="bold" textLength="17" lengthAdjust="spacingAndGlyphs">100%</text>
<text x="718" y="447.4" fill="#f8f040" font-size="8.5" font-weight="bold" textLength="15" lengthAdjust="spacingAndGlyphs">50%</text>
<text x="722.8" y="473" fill="#f8f040" font-size="8.5" font-weight="bold" textLength="10" lengthAdjust="spacingAndGlyphs">0%</text>
<use href="#pump"/>
<use href="#pump" transform="translate(322,-21)"/>
<polygon points="165.0,307.7 177.5,314.2 165.0,320.7" fill="#80bff0"/>
<polygon points="190.0,307.7 177.5,314.2 190.0,320.7" fill="#80bff0"/>
<rect x="176.0" y="303.2" width="3" height="11" fill="#80bff0"/>
<path d="M171.0,304.7 Q171.5,299.2 177.5,299.2 Q183.5,299.2 184.0,304.7 Z" fill="#80bff0"/>
<polygon points="127.0,417.5 139.5,424 127.0,430.5" fill="#80bff0"/>
<polygon points="152.0,417.5 139.5,424 152.0,430.5" fill="#80bff0"/>
<rect x="138.0" y="413" width="3" height="11" fill="#80bff0"/>
<path d="M133.0,414.5 Q133.5,409 139.5,409 Q145.5,409 146.0,414.5 Z" fill="#80bff0"/>
<polygon points="55.599999999999994,588.5 68.1,595 55.599999999999994,601.5" fill="#80bff0"/>
<polygon points="80.6,588.5 68.1,595 80.6,601.5" fill="#80bff0"/>
<rect x="66.6" y="584" width="3" height="11" fill="#80bff0"/>
<path d="M61.599999999999994,585.5 Q62.099999999999994,580 68.1,580 Q74.1,580 74.6,585.5 Z" fill="#80bff0"/>
<polygon points="137.0,655.0 149.5,661.5 137.0,668.0" fill="#80bff0"/>
<polygon points="162.0,655.0 149.5,661.5 162.0,668.0" fill="#80bff0"/>
<rect x="148.0" y="650.5" width="3" height="11" fill="#80bff0"/>
<path d="M143.0,652.0 Q143.5,646.5 149.5,646.5 Q155.5,646.5 156.0,652.0 Z" fill="#80bff0"/>
<polygon points="881.1,307.0 893.6,313.5 881.1,320.0" fill="#80bff0"/>
<polygon points="906.1,307.0 893.6,313.5 906.1,320.0" fill="#80bff0"/>
<rect x="892.1" y="302.5" width="3" height="11" fill="#80bff0"/>
<path d="M887.1,304.0 Q887.6,298.5 893.6,298.5 Q899.6,298.5 900.1,304.0 Z" fill="#80bff0"/>
<polygon points="906.0,173.0 918.5,179.5 906.0,186.0" fill="#80bff0"/>
<polygon points="931.0,173.0 918.5,179.5 931.0,186.0" fill="#80bff0"/>
<rect x="917.0" y="179.5" width="3" height="10" fill="#80bff0"/>
<path d="M912.5,188.5 Q913.0,193.5 918.5,193.5 Q924.0,193.5 924.5,188.5 Z" fill="#80bff0"/>
<polygon points="601.8,206.0 615.2,206.0 608.5,218.3" fill="#80bff0"/>
<polygon points="601.8,230.60000000000002 615.2,230.60000000000002 608.5,218.3" fill="#80bff0"/>
<rect x="608.5" y="217.0" width="9" height="2.7" fill="#80bff0"/>
<path d="M617.0,211.8 Q622.5,212.3 622.5,218.3 Q622.5,224.3 617.0,224.8 Z" fill="#80bff0"/>
<text x="306.29999999999995" y="138" fill="#58e058" font-size="12" textLength="56.800000000000026" lengthAdjust="spacingAndGlyphs">PDISA2515</text>
<rect x="307" y="139" width="41" height="16" fill="#105e62"/>
<text x="327.5" y="149.8" fill="#40f040" font-size="10.5" text-anchor="middle" >0.0</text>
<text x="350" y="152.3" fill="#58e058" font-size="10.5" textLength="18.5" lengthAdjust="spacingAndGlyphs">KPa</text>
<text x="390.9" y="139" fill="#58e058" font-size="12" textLength="41.7" lengthAdjust="spacingAndGlyphs">PIA2520</text>
<rect x="389" y="141" width="41" height="16" fill="#105e62"/>
<text x="409.5" y="151.8" fill="#40f040" font-size="10.5" text-anchor="middle" >0.0</text>
<text x="431.5" y="153.8" fill="#58e058" font-size="10.5" textLength="25" lengthAdjust="spacingAndGlyphs">KPaa</text>
<text x="316.4" y="199" fill="#58e058" font-size="12" textLength="56.2" lengthAdjust="spacingAndGlyphs">PICSA2526</text>
<rect x="315" y="200" width="41" height="16" fill="#105e62"/>
<text x="335.5" y="210.8" fill="#40f040" font-size="10.5" text-anchor="middle" >0.0</text>
<text x="358.5" y="213.3" fill="#58e058" font-size="10.5" textLength="25" lengthAdjust="spacingAndGlyphs">KPaa</text>
<text x="99.9" y="260" fill="#58e058" font-size="12" textLength="39.7" lengthAdjust="spacingAndGlyphs">FIC2501</text>
<rect x="100" y="262" width="41" height="16" fill="#105e62"/>
<text x="120.5" y="272.8" fill="#40f040" font-size="10.5" text-anchor="middle" >0.0</text>
<text x="141" y="276" fill="#58e058" font-size="11">m</text><text x="150" y="269" fill="#58e058" font-size="8">3</text><text x="151" y="276" fill="#58e058" font-size="11">/h</text>
<text x="229.4" y="262.5" fill="#58e058" font-size="12" textLength="34.7" lengthAdjust="spacingAndGlyphs">TI2513</text>
<rect x="227" y="264" width="41" height="16" fill="#105e62"/>
<text x="247.5" y="274.8" fill="#40f040" font-size="10.5" text-anchor="middle" >0.0</text>
<text x="268.5" y="276.8" fill="#58e058" font-size="10.5" textLength="8.5" lengthAdjust="spacingAndGlyphs">℃</text>
<text x="55.4" y="374" fill="#58e058" font-size="12" textLength="42.2" lengthAdjust="spacingAndGlyphs">FIQ2514</text>
<rect x="56" y="374" width="41" height="16" fill="#105e62"/>
<text x="76.5" y="384.8" fill="#40f040" font-size="10.5" text-anchor="middle" >0.0</text>
<text x="98" y="387.3" fill="#58e058" font-size="10.5" textLength="21.5" lengthAdjust="spacingAndGlyphs">Kg/h</text>
<text x="159.4" y="374" fill="#58e058" font-size="12" textLength="49.2" lengthAdjust="spacingAndGlyphs">PICA2533</text>
<rect x="158" y="375" width="41" height="16" fill="#105e62"/>
<text x="178.5" y="385.8" fill="#40f040" font-size="10.5" text-anchor="middle" >0.0</text>
<text x="200" y="389.3" fill="#58e058" font-size="10.5" textLength="26" lengthAdjust="spacingAndGlyphs">MPag</text>
<text x="297.4" y="383" fill="#58e058" font-size="12" textLength="34.2" lengthAdjust="spacingAndGlyphs">TI2508</text>
<rect x="295" y="384" width="41" height="16" fill="#105e62"/>
<text x="315.5" y="394.8" fill="#40f040" font-size="10.5" text-anchor="middle" >0.0</text>
<text x="336.5" y="396.8" fill="#58e058" font-size="10.5" textLength="8.5" lengthAdjust="spacingAndGlyphs">℃</text>
<text x="370.9" y="303" fill="#58e058" font-size="12" textLength="43.2" lengthAdjust="spacingAndGlyphs">PDI2502</text>
<rect x="369" y="304" width="41" height="16" fill="#105e62"/>
<text x="389.5" y="314.8" fill="#40f040" font-size="10.5" text-anchor="middle" >0.0</text>
<text x="411.5" y="318.3" fill="#58e058" font-size="10.5" textLength="18.5" lengthAdjust="spacingAndGlyphs">KPa</text>
<text x="370.9" y="402" fill="#58e058" font-size="12" textLength="34.7" lengthAdjust="spacingAndGlyphs">PI2527</text>
<rect x="369" y="403" width="41" height="16" fill="#105e62"/>
<text x="389.5" y="413.8" fill="#40f040" font-size="10.5" text-anchor="middle" >0.0</text>
<text x="411.5" y="416.8" fill="#58e058" font-size="10.5" textLength="25" lengthAdjust="spacingAndGlyphs">KPaa</text>
<text x="525.4" y="222.7" fill="#58e058" font-size="12" textLength="34.40000000000005" lengthAdjust="spacingAndGlyphs">TI2505</text>
<rect x="523" y="224" width="41" height="16" fill="#105e62"/>
<text x="543.5" y="234.8" fill="#40f040" font-size="10.5" text-anchor="middle" >0.0</text>
<text x="565" y="237.3" fill="#58e058" font-size="10.5" textLength="8.5" lengthAdjust="spacingAndGlyphs">℃</text>
<text x="525.9" y="300" fill="#58e058" font-size="12" textLength="33.7" lengthAdjust="spacingAndGlyphs">TI2506</text>
<rect x="523" y="301" width="41" height="16" fill="#105e62"/>
<text x="543.5" y="311.8" fill="#40f040" font-size="10.5" text-anchor="middle" >0.0</text>
<text x="565" y="312.8" fill="#58e058" font-size="10.5" textLength="8.5" lengthAdjust="spacingAndGlyphs">℃</text>
<text x="525.9" y="374" fill="#58e058" font-size="12" textLength="33.7" lengthAdjust="spacingAndGlyphs">TI2509</text>
<rect x="523" y="375.5" width="41" height="16" fill="#105e62"/>
<text x="543.5" y="386.3" fill="#40f040" font-size="10.5" text-anchor="middle" >0.0</text>
<text x="565" y="387.8" fill="#58e058" font-size="10.5" textLength="8.5" lengthAdjust="spacingAndGlyphs">℃</text>
<text x="525.9" y="405" fill="#58e058" font-size="12" textLength="41.2" lengthAdjust="spacingAndGlyphs">TIA2503</text>
<rect x="523" y="405.5" width="41" height="16" fill="#105e62"/>
<text x="543.5" y="416.3" fill="#40f040" font-size="10.5" text-anchor="middle" >0.0</text>
<text x="565" y="417.8" fill="#58e058" font-size="10.5" textLength="8.5" lengthAdjust="spacingAndGlyphs">℃</text>
<text x="525.9" y="457" fill="#58e058" font-size="12" textLength="34.2" lengthAdjust="spacingAndGlyphs">TI2510</text>
<rect x="523" y="459" width="41" height="16" fill="#105e62"/>
<text x="543.5" y="469.8" fill="#40f040" font-size="10.5" text-anchor="middle" >0.0</text>
<text x="565" y="472.3" fill="#58e058" font-size="10.5" textLength="8.5" lengthAdjust="spacingAndGlyphs">℃</text>
<text x="625.9" y="259.5" fill="#58e058" font-size="12" textLength="39.2" lengthAdjust="spacingAndGlyphs">FIC2521</text>
<rect x="626" y="261" width="41" height="16" fill="#105e62"/>
<text x="646.5" y="271.8" fill="#40f040" font-size="10.5" text-anchor="middle" >0.0</text>
<text x="667.5" y="273" fill="#58e058" font-size="11">m</text><text x="676" y="266" fill="#58e058" font-size="8">3</text><text x="677" y="273" fill="#58e058" font-size="11">/h</text>
<text x="835.4" y="350" fill="#58e058" font-size="12" textLength="41.2" lengthAdjust="spacingAndGlyphs">TIC2504</text>
<rect x="834" y="352" width="41" height="16" fill="#105e62"/>
<text x="854.5" y="362.8" fill="#40f040" font-size="10.5" text-anchor="middle" >0.0</text>
<text x="875.5" y="363.8" fill="#58e058" font-size="10.5" textLength="8.5" lengthAdjust="spacingAndGlyphs">℃</text>
<text x="761.9" y="437" fill="#58e058" font-size="12" textLength="54.49999999999996" lengthAdjust="spacingAndGlyphs">LICSA2522</text>
<rect x="760" y="438" width="41" height="16" fill="#105e62"/>
<text x="780.5" y="448.8" fill="#40f040" font-size="10.5" text-anchor="middle" >0.0</text>
<text x="803" y="450.3" fill="#58e058" font-size="10.5" textLength="9" lengthAdjust="spacingAndGlyphs">%</text>
<text x="365.9" y="461" fill="#58e058" font-size="12" textLength="55.2" lengthAdjust="spacingAndGlyphs">LICSA2512</text>
<rect x="364" y="463" width="41" height="16" fill="#105e62"/>
<text x="384.5" y="473.8" fill="#40f040" font-size="10.5" text-anchor="middle" >0.0</text>
<text x="406.5" y="475.3" fill="#58e058" font-size="10.5" textLength="9" lengthAdjust="spacingAndGlyphs">%</text>
<text x="417.9" y="574.5" fill="#58e058" font-size="12" textLength="54.2" lengthAdjust="spacingAndGlyphs">TICSA2507</text>
<rect x="415" y="576" width="41" height="16" fill="#105e62"/>
<text x="435.5" y="586.8" fill="#40f040" font-size="10.5" text-anchor="middle" >0.0</text>
<text x="457" y="587.8" fill="#58e058" font-size="10.5" textLength="8.5" lengthAdjust="spacingAndGlyphs">℃</text>
<text x="208.4" y="628" fill="#58e058" font-size="12" textLength="46.2" lengthAdjust="spacingAndGlyphs">FICA2511</text>
<rect x="207" y="629" width="41" height="16" fill="#105e62"/>
<text x="227.5" y="639.8" fill="#40f040" font-size="10.5" text-anchor="middle" >0.0</text>
<text x="249" y="639.8" fill="#58e058" font-size="10.5" textLength="21.5" lengthAdjust="spacingAndGlyphs">Kg/h</text>
<text x="54.0" y="536" fill="#58e058" font-size="12" textLength="47.4" lengthAdjust="spacingAndGlyphs">LICA2534</text>
<rect x="52" y="537.4" width="41" height="16" fill="#105e62"/>
<text x="72.5" y="548.1999999999999" fill="#40f040" font-size="10.5" text-anchor="middle" >0.0</text>
<text x="96" y="549.8" fill="#58e058" font-size="10.5" textLength="9" lengthAdjust="spacingAndGlyphs">%</text>
<text x="435.2" y="100.5" fill="#e0e070" font-size="17" textLength="35.9" lengthAdjust="spacingAndGlyphs">脱水</text>
<text x="28.8" y="303" fill="#e0e070" font-size="13" textLength="48.2" lengthAdjust="spacingAndGlyphs">E260-12</text>
<text x="27.2" y="414" fill="#e0e070" font-size="13" textLength="27.4" lengthAdjust="spacingAndGlyphs">SHP</text>
<text x="22.2" y="613.5" fill="#e0e070" font-size="13" textLength="26.4" lengthAdjust="spacingAndGlyphs">CHP</text>
<text x="29.7" y="647" fill="#e0e070" font-size="13" textLength="46.9" lengthAdjust="spacingAndGlyphs">C260-01</text>
<text x="978.2" y="169" fill="#e0e070" font-size="13" textLength="22.9" lengthAdjust="spacingAndGlyphs">WC</text>
<text x="976.2" y="271" fill="#e0e070" font-size="13" textLength="21.4" lengthAdjust="spacingAndGlyphs">WC</text>
<text x="925.2" y="300" fill="#e0e070" font-size="13" textLength="77.15" lengthAdjust="spacingAndGlyphs">B260-081A/B</text>
<text x="943.2" y="568" fill="#e0e070" font-size="13" textLength="47.9" lengthAdjust="spacingAndGlyphs">F180-02</text>
<text x="945.2" y="607" fill="#e0e070" font-size="13" textLength="45.9" lengthAdjust="spacingAndGlyphs">T260-11</text>
<text x="944.2" y="647" fill="#e0e070" font-size="13" textLength="46.9" lengthAdjust="spacingAndGlyphs">T170-10</text>
<text x="212.79999999999998" y="532" fill="#e0e070" font-size="13" textLength="47.800000000000004" lengthAdjust="spacingAndGlyphs">E250-02</text>
<text x="150.89999999999998" y="559.7" fill="#e0e070" font-size="13" textLength="62.100000000000016" lengthAdjust="spacingAndGlyphs">S250-0202</text>
<text x="490.2" y="506" fill="#e0e070" font-size="13" textLength="46.4" lengthAdjust="spacingAndGlyphs">C250-01</text>
<text x="349.7" y="646" fill="#e0e070" font-size="13" textLength="47.9" lengthAdjust="spacingAndGlyphs">P250-03</text>
<text x="656.7" y="627" fill="#e0e070" font-size="13" textLength="48.4" lengthAdjust="spacingAndGlyphs">P250-06</text>
<text x="657.2" y="510" fill="#e0e070" font-size="13" textLength="45.9" lengthAdjust="spacingAndGlyphs">T250-07</text>
<text x="836.2" y="237" fill="#e0e070" font-size="13" textLength="47.4" lengthAdjust="spacingAndGlyphs">E250-04</text>
<rect x="563" y="326" width="103" height="15" fill="#fbfbe6"/>
<text x="565" y="337.6" fill="#000" font-size="10.5" textLength="98" lengthAdjust="spacingAndGlyphs">AD1111311116 (AD)</text>
<rect x="0" y="68" width="1024" height="1" fill="#808080"/>
<rect x="0" y="68" width="1" height="652" fill="#808080"/>
<rect x="1" y="69" width="1" height="651" fill="#404040"/>
<rect x="1022" y="68" width="2" height="652" fill="#ffffff"/>
<rect x="2" y="688" width="1020" height="16" fill="#ffffff"/>
<rect x="2" y="704" width="1020" height="16" fill="url(#dith)"/>
<rect x="2" y="704" width="16" height="16" fill="#d4d0c8"/>
<path d="M2.5,719 V704.5 H17" stroke="#ffffff" fill="none" stroke-width="1"/>
<path d="M3,718.5 H16.5 V705" stroke="#808080" fill="none" stroke-width="1"/>
<path d="M2,719.5 H17.5 V704" stroke="#404040" fill="none" stroke-width="1"/>
<path d="M6.5,712 L10.5,708 L10.5,716 Z" fill="#000"/>
<rect x="18" y="704" width="16" height="16" fill="#d4d0c8"/>
<path d="M18.5,719 V704.5 H33" stroke="#ffffff" fill="none" stroke-width="1"/>
<path d="M19,718.5 H32.5 V705" stroke="#808080" fill="none" stroke-width="1"/>
<path d="M18,719.5 H33.5 V704" stroke="#404040" fill="none" stroke-width="1"/>
<rect x="1006" y="704" width="16" height="16" fill="#d4d0c8"/>
<path d="M1006.5,719 V704.5 H1021" stroke="#ffffff" fill="none" stroke-width="1"/>
<path d="M1007,718.5 H1020.5 V705" stroke="#808080" fill="none" stroke-width="1"/>
<path d="M1006,719.5 H1021.5 V704" stroke="#404040" fill="none" stroke-width="1"/>
<path d="M1016.5,712 L1012.5,708 L1012.5,716 Z" fill="#000"/>
<rect x="0" y="720" width="1024" height="21" fill="#d4d0c8"/>
<text x="2" y="736" fill="#000" font-size="12">对象选择允许.</text>
<path d="M909.5,739 V724.5 H964" stroke="#808080" fill="none"/><path d="M909.5,739.5 H964.5 V724.5" stroke="#ffffff" fill="none"/>
<text x="912" y="736" fill="#000" font-size="12">脱水</text>
<path d="M967.5,739 V724.5 H1022" stroke="#808080" fill="none"/><path d="M967.5,739.5 H1022.5 V724.5" stroke="#ffffff" fill="none"/>
<text x="969.5" y="736" fill="#000" font-size="12" textLength="41" lengthAdjust="spacingAndGlyphs">NOLOCK</text>
<rect x="0" y="741" width="1024" height="27" fill="#d4d0c8"/><rect x="0" y="741" width="1024" height="1" fill="#d4d0c8"/><rect x="0" y="742" width="1024" height="1" fill="#ffffff"/>
<rect x="2" y="744" width="50" height="22" fill="#d4d0c8"/>
<path d="M2.5,765 V744.5 H51" stroke="#ffffff" fill="none" stroke-width="1"/>
<path d="M3,764.5 H50.5 V745" stroke="#808080" fill="none" stroke-width="1"/>
<path d="M2,765.5 H51.5 V744" stroke="#404040" fill="none" stroke-width="1"/>
<path d="M10,749 Q14,747 21,749 V761 Q14,759 10,761 Z" fill="#000"/><path d="M11,750 Q13,749 15,749.5 V754.5 Q13,754 11,755 Z" fill="#e03020"/><path d="M16,749.5 Q18,749.5 20,750 V755 Q18,754.5 16,754.5 Z" fill="#20b020"/><path d="M11,756 Q13,755 15,755.5 V760 Q13,759.5 11,760 Z" fill="#2040e0"/><path d="M16,755.5 Q18,755.5 20,756 V760 Q18,759.5 16,759.5 Z" fill="#f0d000"/>
<path d="M5,751 H9 M5,754 H9 M5,757 H9 M6,760 H9" stroke="#e03020" stroke-width="1.2"/><path d="M5,752.5 H9 M5,755.5 H9 M5,758.5 H9" stroke="#2040e0" stroke-width="0.8"/>
<text x="24" y="760" fill="#000" font-size="12" font-weight="bold" textLength="23.5" lengthAdjust="spacingAndGlyphs">开始</text>
<rect x="57.5" y="746" width="1" height="19" fill="#ffffff"/><rect x="58.5" y="746" width="2" height="19" fill="#d4d0c8"/><rect x="60.5" y="746" width="1" height="19" fill="#808080"/>
<rect x="160.5" y="745" width="1" height="20" fill="#808080"/><rect x="161.5" y="745" width="1" height="20" fill="#ffffff"/>
<rect x="164" y="746" width="1" height="19" fill="#ffffff"/><rect x="167" y="746" width="1" height="19" fill="#808080"/>
<ellipse cx="77" cy="754" rx="9" ry="4" fill="none" stroke="#f0b030" stroke-width="1.3" transform="rotate(-25 77 754)"/><text x="68.5" y="762" font-size="20" font-weight="bold" fill="#1a5ad8">e</text>
<rect x="92" y="748" width="15" height="14" fill="#2080b0"/><rect x="94" y="751" width="10" height="9" fill="#f0f0e8"/><rect x="96" y="753" width="4" height="5" fill="none" stroke="#000" stroke-width="0.8"/><path d="M99,757 L106,748" stroke="#000" stroke-width="1.6"/><path d="M103,751 L106,748" stroke="#e0c020" stroke-width="1.6"/>
<path d="M116,758 L126,748 L130,751 L121,762 Z" fill="#fff" stroke="#808080" stroke-width="0.6"/><path d="M115,761 L127,749 L122,756 L129,753 L117,764 L121,757 Z" fill="#f0b020" stroke="#805000" stroke-width="0.6"/>
<circle cx="145" cy="755" r="7.5" fill="#c0dcf8" stroke="#3070c0" stroke-width="1.6"/><circle cx="145" cy="755" r="5" fill="#e8f4ff"/><text x="142.3" y="759" font-size="10" font-weight="bold" fill="#1a40a0">1</text>
<rect x="172.5" y="744" width="87.5" height="22" fill="#d4d0c8"/>
<path d="M173.0,765 V744.5 H259.0" stroke="#ffffff" fill="none" stroke-width="1"/>
<path d="M173.5,764.5 H258.5 V745" stroke="#808080" fill="none" stroke-width="1"/>
<path d="M172.5,765.5 H259.5 V744" stroke="#404040" fill="none" stroke-width="1"/>
<rect x="180.5" y="748" width="11" height="14" fill="#fff" stroke="#606060"/><circle cx="183.5" cy="755" r="5" fill="#2a6ad8"/><circle cx="183.5" cy="755" r="2" fill="#fff"/>
<text x="196.2" y="759.5" fill="#000" font-size="12" textLength="58.10000000000002" lengthAdjust="spacingAndGlyphs">い 瓣ｲ 稲...</text>
<rect x="267.5" y="744" width="90" height="22" fill="#d4d0c8"/>
<path d="M268.0,765 V744.5 H356.5" stroke="#ffffff" fill="none" stroke-width="1"/>
<path d="M268.5,764.5 H356.0 V745" stroke="#808080" fill="none" stroke-width="1"/>
<path d="M267.5,765.5 H357.0 V744" stroke="#404040" fill="none" stroke-width="1"/>
<path d="M272.5,750 H278.5 L280.5,752 H288.5 V762 H272.5 Z" fill="#f0e080" stroke="#806000"/>
<text x="288.5" y="759.5" fill="#000" font-size="12" textLength="59.69999999999999" lengthAdjust="spacingAndGlyphs">内部接线图</text>
<rect x="361" y="744" width="89" height="22" fill="#d4d0c8"/>
<path d="M361.5,765 V744.5 H449" stroke="#ffffff" fill="none" stroke-width="1"/>
<path d="M362,764.5 H448.5 V745" stroke="#808080" fill="none" stroke-width="1"/>
<path d="M361,765.5 H449.5 V744" stroke="#404040" fill="none" stroke-width="1"/>
<rect x="366" y="748" width="16" height="14" fill="#fff" stroke="#208040" stroke-width="1.5"/><path d="M369,751 L379,760 M379,751 L369,760" stroke="#208040" stroke-width="2"/>
<text x="382.4" y="759.5" fill="#000" font-size="12" textLength="64.0" lengthAdjust="spacingAndGlyphs">Microsoft E...</text>
<rect x="454" y="744" width="90" height="22" fill="url(#dith)"/>
<rect x="454" y="744" width="90" height="22" fill="none"/>
<path d="M454.5,765 V744.5 H543" stroke="#404040" fill="none" stroke-width="1"/>
<path d="M455.5,764.5 V745.5 H542.5" stroke="#808080" fill="none" stroke-width="1"/>
<path d="M454,765.5 H543.5 V744" stroke="#ffffff" fill="none" stroke-width="1"/>
<rect x="459" y="748" width="16" height="15" fill="#f0e8e0"/><path d="M460,762 L464,751 L466,751 L463,760 Z" fill="#e04020"/><rect x="468" y="750" width="5" height="5" fill="#2040a0" transform="rotate(45 470.5 752.5)"/>
<text x="476.4" y="759.5" fill="#000" font-size="12" textLength="63.5" lengthAdjust="spacingAndGlyphs">Industrial I...</text>
<rect x="549.5" y="744" width="90" height="22" fill="#d4d0c8"/>
<path d="M550.0,765 V744.5 H638.5" stroke="#ffffff" fill="none" stroke-width="1"/>
<path d="M550.5,764.5 H638.0 V745" stroke="#808080" fill="none" stroke-width="1"/>
<path d="M549.5,765.5 H639.0 V744" stroke="#404040" fill="none" stroke-width="1"/>
<path d="M554.5,750 H560.5 L562.5,752 H570.5 V762 H554.5 Z" fill="#f0e080" stroke="#806000"/>
<text x="570.5" y="759.5" fill="#000" font-size="12" textLength="46.60000000000002" lengthAdjust="spacingAndGlyphs">山东恒拓</text>
<rect x="642" y="744" width="90" height="22" fill="#d4d0c8"/>
<path d="M642.5,765 V744.5 H731" stroke="#ffffff" fill="none" stroke-width="1"/>
<path d="M643,764.5 H730.5 V745" stroke="#808080" fill="none" stroke-width="1"/>
<path d="M642,765.5 H731.5 V744" stroke="#404040" fill="none" stroke-width="1"/>
<rect x="647" y="748" width="13" height="13" fill="#f0e0d0" stroke="#c04020"/><rect x="650" y="751" width="7" height="7" fill="none" stroke="#c04020"/><rect x="657" y="750" width="6" height="12" fill="#fff" stroke="#606060"/>
<text x="663.9" y="759.5" fill="#000" font-size="12" textLength="59.39999999999998" lengthAdjust="spacingAndGlyphs">烟台巨力...</text>
<path d="M749.5,765.5 V744.5 H1021.5" stroke="#808080" fill="none"/><path d="M749.5,766.5 H1022.5 V744" stroke="#ffffff" fill="none"/>
<rect x="757" y="750" width="9" height="9" fill="#fff" stroke="#c00000" stroke-width="1.2"/><text x="758.5" y="758" font-size="8" font-weight="bold" fill="#c00000">R</text><path d="M759,747 V750 M764,747 V750 M759,759 V762 M764,759 V762" stroke="#000"/>
<path d="M775,757 L783,761 L790,757 L782,753 Z" fill="#a0a0a0" stroke="#404040" stroke-width="0.8"/><path d="M777,753 L784,748 M777,753 L781,753 M777,753 L777,749" stroke="#20a020" stroke-width="2"/>
<circle cx="800" cy="755" r="7" fill="#ffe0c0" stroke="#e04000" stroke-width="1.8"/><path d="M795,750 L805,760" stroke="#e04000" stroke-width="1.6"/>
<rect x="810" y="748" width="15" height="15" fill="#fff" stroke="#000"/><path d="M812,750 L820,755 L812,760 Z" fill="#20a040"/><rect x="819" y="755" width="5" height="6" fill="#808080"/>
<path d="M829,761 L841,750 L837,756 L842,754 L831,763 L834,758 Z" fill="#f0e040" stroke="#808000" stroke-width="0.8"/>
<rect x="848" y="749" width="8" height="7" fill="#60a0a0" stroke="#000" stroke-width="0.8"/><rect x="846" y="757" width="11" height="3" fill="#808080"/><path d="M856,757 L862,763 M862,757 L856,763" stroke="#e00000" stroke-width="1.8"/>
<path d="M867,748 H880 V756 Q880,761 873.5,763 Q867,761 867,756 Z" fill="#2040a0"/><path d="M870,751 L873.5,759 L877,751" stroke="#fff" stroke-width="1.5" fill="none"/><path d="M870,751 L873.5,759 L877,751" stroke="#e00000" stroke-width="0.8" fill="none"/>
<rect x="885" y="748" width="15" height="15" fill="#fff" stroke="#000"/><path d="M887,761 V756 M890,761 V753 M893,761 V751 M896,761 V749" stroke="#404040" stroke-width="1.5"/><path d="M886,749 L899,762 M899,749 L886,762" stroke="#e00000" stroke-width="1.8"/>
<rect x="903" y="754" width="8" height="7" fill="#60c0e0" stroke="#000" stroke-width="0.8"/><rect x="910" y="749" width="7" height="6" fill="#60c0e0" stroke="#000" stroke-width="0.8"/><path d="M907,761 L915,755" stroke="#2060e0" stroke-width="1.5"/>
<circle cx="925" cy="757" r="5" fill="#2040c0"/><circle cx="922" cy="752" r="3" fill="#e02020"/><circle cx="928" cy="753" r="3" fill="#20a020"/><circle cx="926" cy="759" r="3" fill="#f0c000"/>
<rect x="937" y="749" width="9" height="8" fill="#d0d0d0" stroke="#000"/><rect x="934" y="756" width="7" height="7" fill="#fff" stroke="#000"/><rect x="943" y="758" width="5" height="4" fill="#404040"/>
<rect x="950" y="747" width="17" height="16" fill="#0a1a8a"/><text x="951.5" y="759" font-size="10.5" fill="#fff" textLength="14" lengthAdjust="spacingAndGlyphs">CH</text>
<text x="981" y="760" fill="#000" font-size="12" textLength="27.5" lengthAdjust="spacingAndGlyphs">13:59</text>
</svg></body></html>
